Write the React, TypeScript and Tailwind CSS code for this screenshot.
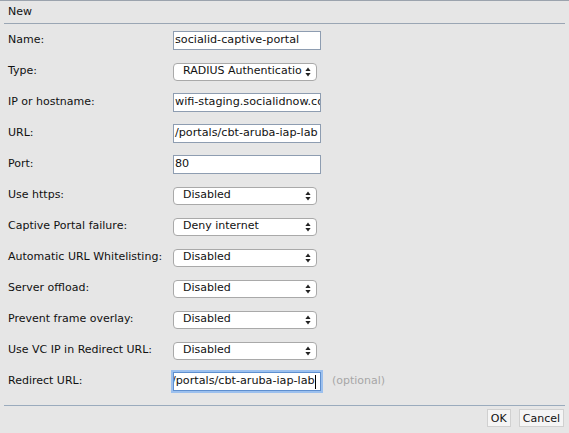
import React from "react";

type Row = { label: string; kind: "input" | "select" | "focus"; value: string };

const rows: Row[] = [
  { label: "Name:", kind: "input", value: "socialid-captive-portal" },
  { label: "Type:", kind: "select", value: "RADIUS Authenticatio" },
  { label: "IP or hostname:", kind: "input", value: "wifi-staging.socialidnow.com" },
  { label: "URL:", kind: "input", value: "/portals/cbt-aruba-iap-lab" },
  { label: "Port:", kind: "input", value: "80" },
  { label: "Use https:", kind: "select", value: "Disabled" },
  { label: "Captive Portal failure:", kind: "select", value: "Deny internet" },
  { label: "Automatic URL Whitelisting:", kind: "select", value: "Disabled" },
  { label: "Server offload:", kind: "select", value: "Disabled" },
  { label: "Prevent frame overlay:", kind: "select", value: "Disabled" },
  { label: "Use VC IP in Redirect URL:", kind: "select", value: "Disabled" },
  { label: "Redirect URL:", kind: "focus", value: "/portals/cbt-aruba-iap-lab" },
];

function Arrows() {
  return (
    <svg width="6" height="10" viewBox="0 0 6 10" className="shrink-0">
      <path d="M3 0.5 L5.6 4 H0.4 Z" fill="#222" />
      <path d="M3 9.5 L5.6 6 H0.4 Z" fill="#222" />
    </svg>
  );
}

function Control({ row }: { row: Row }) {
  if (row.kind === "select") {
    return (
      <div className="flex items-center h-[18px] w-[144px] bg-white border border-[#a9a9a9] rounded-[4px] pl-[9px] pr-[5px]">
        <span className="flex-1 overflow-hidden whitespace-nowrap">{row.value}</span>
        <Arrows />
      </div>
    );
  }
  if (row.kind === "focus") {
    return (
      <div className="flex items-center gap-[11px]">
        <div className="flex items-center h-[19px] w-[148px] bg-white border border-[#5e8fcf] shadow-[0_0_0_2px_#9cc0ee] overflow-hidden">
          <span className="whitespace-nowrap -ml-[2px] text-[11.2px]">{row.value}</span>
          <span className="w-px h-[14px] bg-black shrink-0" />
        </div>
        <span className="text-[#a6a6a6]">(optional)</span>
      </div>
    );
  }
  return (
    <div className="flex items-center h-[19px] w-[148px] bg-white border border-[#8e9db1] pl-[1px] overflow-hidden">
      <span className="whitespace-nowrap text-[11.2px]">{row.value}</span>
    </div>
  );
}

export default function App() {
  return (
    <div
      className="w-[569px] h-[433px] bg-[#e6e6e6] border-t border-[#9ba3ad] text-[11px] text-[#111] flex flex-col"
      style={{ fontFamily: '"DejaVu Sans", Verdana, sans-serif' }}
    >
      <div className="h-[23px] mx-[4px] border-b border-[#9aa6b4] flex items-center px-[4px] text-[11px]">New</div>
      <div className="flex flex-col mx-[4px] border-b border-[#9aabbd] pt-[1px] pb-[8px]">
        {rows.map((r) => (
          <div key={r.label} className="h-[31px] grid grid-cols-[169px_1fr] items-center">
            <span className="pl-[4px]">{r.label}</span>
            <Control row={r} />
          </div>
        ))}
      </div>
      <div className="flex justify-end gap-[8px] pr-[5px] pt-[3px]">
        <button className="h-[18px] px-[3px] bg-[#f5f5f5] border border-[#d0d0d0] leading-none">OK</button>
        <button className="h-[18px] px-[3px] bg-[#f5f5f5] border border-[#d0d0d0] leading-none">Cancel</button>
      </div>
    </div>
  );
}
